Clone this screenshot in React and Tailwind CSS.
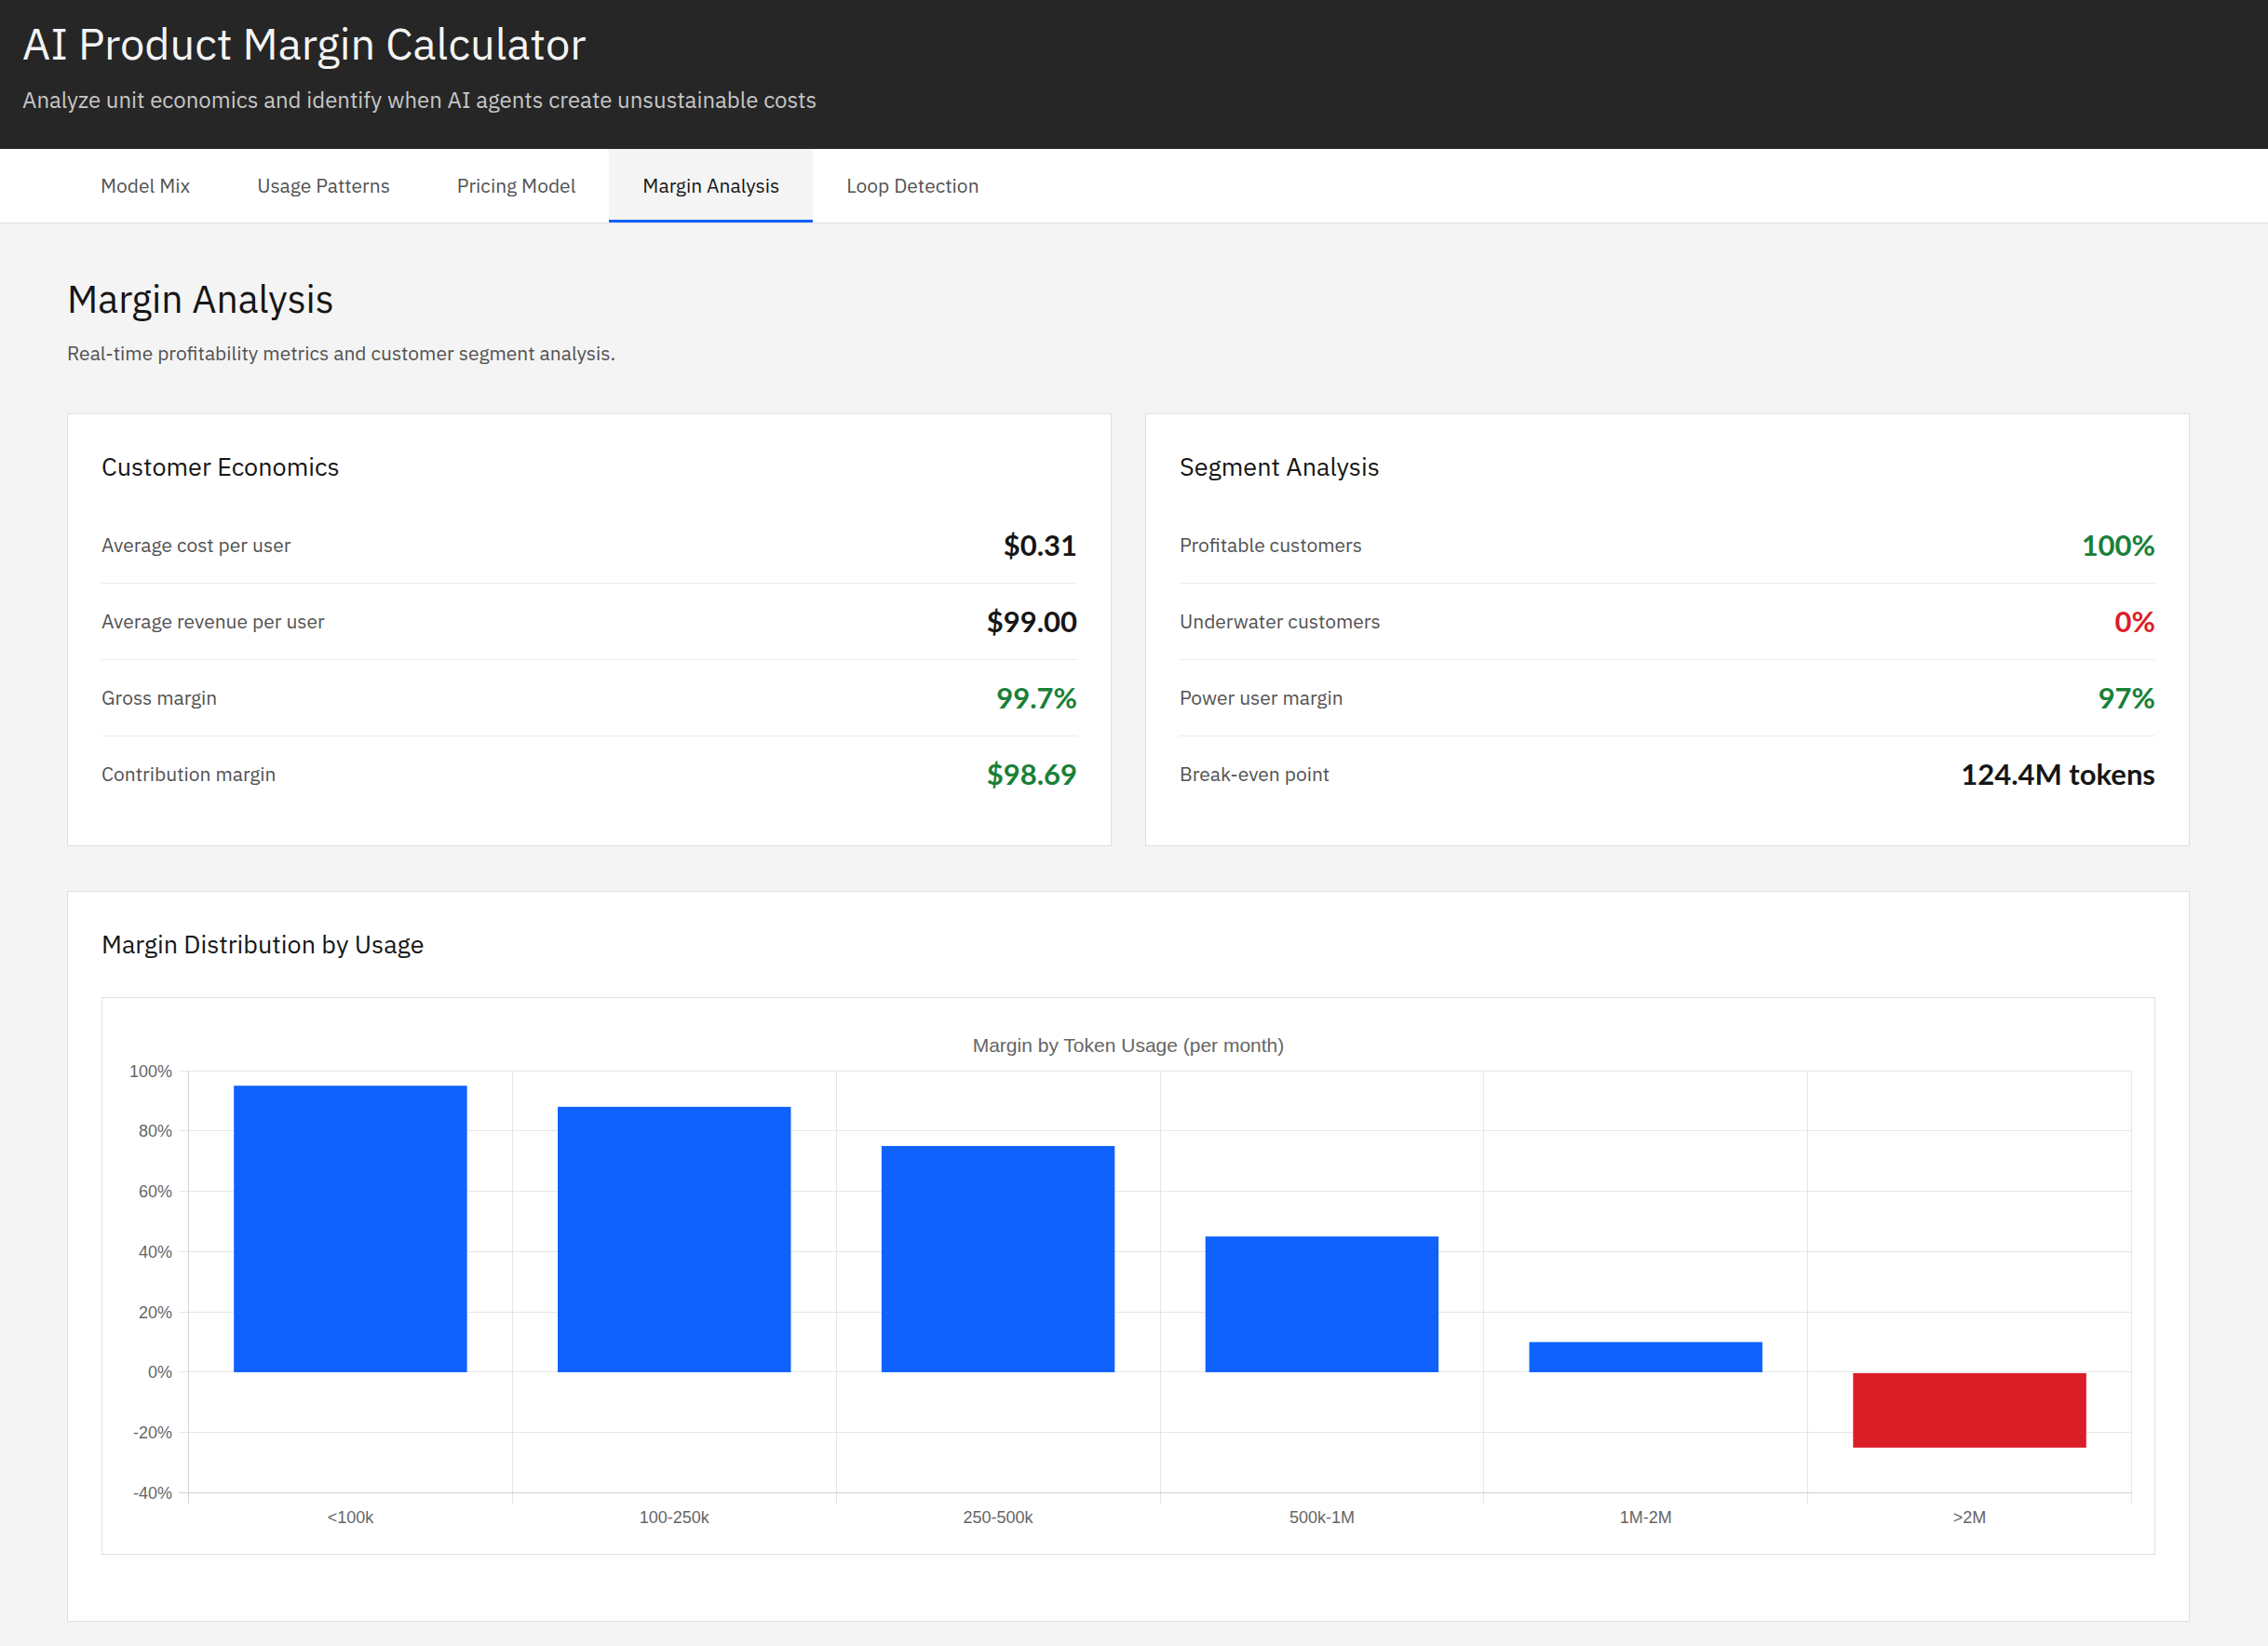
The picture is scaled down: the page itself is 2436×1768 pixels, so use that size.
import React from "react";

const tabs = ["Model Mix", "Usage Patterns", "Pricing Model", "Margin Analysis", "Loop Detection"];

const customerRows = [
  { label: "Average cost per user", value: "$0.31", tone: "text-[#161616]" },
  { label: "Average revenue per user", value: "$99.00", tone: "text-[#161616]" },
  { label: "Gross margin", value: "99.7%", tone: "text-[#198038]" },
  { label: "Contribution margin", value: "$98.69", tone: "text-[#198038]" },
];

const segmentRows = [
  { label: "Profitable customers", value: "100%", tone: "text-[#198038]" },
  { label: "Underwater customers", value: "0%", tone: "text-[#da1e28]" },
  { label: "Power user margin", value: "97%", tone: "text-[#198038]" },
  { label: "Break-even point", value: "124.4M tokens", tone: "text-[#161616]" },
];

const usageBuckets = [
  { label: "<100k", margin: 95 },
  { label: "100-250k", margin: 88 },
  { label: "250-500k", margin: 75 },
  { label: "500k-1M", margin: 45 },
  { label: "1M-2M", margin: 10 },
  { label: ">2M", margin: -25 },
];

function MetricCard({ title, rows }) {
  return (
    <div className="border border-[#e0e0e0] bg-white p-[36px]">
      <h3 className="mb-[24px] text-[27px] leading-[40px] font-normal text-[#161616]">{title}</h3>
      <div>
        {rows.map((row) => (
          <div
            key={row.label}
            className="flex items-center justify-between border-b border-[#ececec] py-[22px] last:border-b-0"
          >
            <span className="text-[21px] text-[#525252]">{row.label}</span>
            <span className={`font-['Lato',sans-serif] text-[31px] leading-[37px] font-bold ${row.tone}`}>
              {row.value}
            </span>
          </div>
        ))}
      </div>
    </div>
  );
}

function MarginChart() {
  const W = 2204;
  const H = 597;
  const left = 92.5;
  const right = 2179.5;
  const top = 78;
  const bottom = 531.5;
  const max = 100;
  const min = -40;
  const y = (v) => top + ((max - v) / (max - min)) * (bottom - top);
  const snap = (v) => Math.round(v - 0.5) + 0.5;
  const colW = (right - left) / usageBuckets.length;
  const barW = colW * 0.72;
  const ticks = [100, 80, 60, 40, 20, 0, -20, -40];
  const tickEnd = bottom + 12;
  const font = "'Liberation Sans', Arial, sans-serif";

  return (
    <svg viewBox={`0 0 ${W} ${H}`} className="block h-full w-full" fontFamily={font}>
      <text x={W / 2} y={58} textAnchor="middle" fontSize="21" fill="#666666">
        Margin by Token Usage (per month)
      </text>

      {ticks.slice(0, -1).map((t) => (
        <line key={t} x1={82} x2={right} y1={snap(y(t))} y2={snap(y(t))} stroke="#e6e6e6" strokeWidth="1" />
      ))}

      {usageBuckets.map((b, i) => {
        const cx = left + colW * (i + 0.5);
        const y0 = y(0);
        const yv = y(b.margin);
        const yTop = Math.min(y0, yv);
        const h = Math.abs(y0 - yv);
        return (
          <rect
            key={b.label}
            x={cx - barW / 2}
            y={b.margin < 0 ? yTop + 1 : yTop}
            width={barW}
            height={b.margin < 0 ? h - 1 : h}
            fill={b.margin < 0 ? "#da1e28" : "#0f62fe"}
          />
        );
      })}

      {usageBuckets.slice(1).map((b, i) => {
        const x = snap(left + colW * (i + 1));
        return <line key={b.label} x1={x} x2={x} y1={top} y2={tickEnd} stroke="#e6e6e6" strokeWidth="1" />;
      })}
      <line x1={right} x2={right} y1={top} y2={tickEnd} stroke="#e6e6e6" strokeWidth="1" />
      <line x1={left} x2={left} y1={top} y2={tickEnd} stroke="#d2d2d2" strokeWidth="1" />
      <line x1={82} x2={right} y1={snap(bottom)} y2={snap(bottom)} stroke="#d2d2d2" strokeWidth="1" />

      {ticks.map((t) => (
        <text key={t} x={75} y={y(t) + 6.5} textAnchor="end" fontSize="18" fill="#666666">
          {t}%
        </text>
      ))}

      {usageBuckets.map((b, i) => (
        <text
          key={b.label}
          x={left + colW * (i + 0.5)}
          y={564}
          textAnchor="middle"
          fontSize="18"
          fill="#666666"
        >
          {b.label}
        </text>
      ))}
    </svg>
  );
}

export default function App() {
  const active = "Margin Analysis";
  return (
    <div className="min-h-screen bg-[#f4f4f4] font-['IBM_Plex_Sans','Liberation_Sans',Arial,sans-serif]">
      <header className="h-[160px] bg-[#262626] px-[24px] pt-[19px]">
        <h1 className="text-[47px] leading-[56px] font-normal text-[#f4f4f4]">AI Product Margin Calculator</h1>
        <p className="mt-[16px] text-[24px] leading-[32px] text-[#c6c6c6]">
          Analyze unit economics and identify when AI agents create unsustainable costs
        </p>
      </header>

      <nav className="flex h-[80px] border-b border-[#e0e0e0] bg-white pl-[72px]">
        {tabs.map((tab) => (
          <button
            key={tab}
            type="button"
            className={
              tab === active
                ? "flex h-full items-center bg-[#f4f4f4] px-[36px] text-[21px] text-[#161616] shadow-[inset_0_-3px_0_#0f62fe]"
                : "flex h-full items-center px-[36px] text-[21px] text-[#525252]"
            }
          >
            {tab}
          </button>
        ))}
      </nav>

      <main className="px-[72px] pt-[57px] pb-[25px]">
        <div className="max-w-[2280px]">
          <h2 className="text-[41px] leading-[48px] font-normal text-[#161616]">Margin Analysis</h2>
          <p className="mt-[20px] text-[21px] leading-[28px] text-[#525252]">
            Real-time profitability metrics and customer segment analysis.
          </p>

          <div className="mt-[51px] grid grid-cols-2 gap-[36px]">
            <MetricCard title="Customer Economics" rows={customerRows} />
            <MetricCard title="Segment Analysis" rows={segmentRows} />
          </div>

          <section className="mt-[48px] border border-[#e0e0e0] bg-white px-[36px] pt-[36px] pb-[71px]">
            <h3 className="mb-[37px] text-[27px] leading-[40px] font-normal text-[#161616]">
              Margin Distribution by Usage
            </h3>
            <div className="h-[599px] border border-[#e0e0e0]">
              <MarginChart />
            </div>
          </section>
        </div>
      </main>
    </div>
  );
}
